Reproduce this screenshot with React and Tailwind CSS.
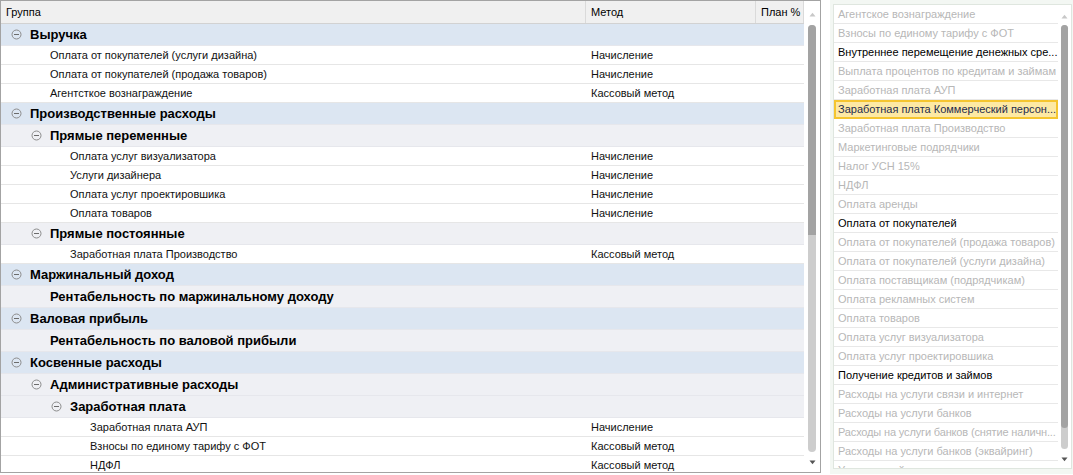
import React from "react";

const rows = [
  { t: "g0", label: "Выручка" },
  { t: "d", lv: 1, label: "Оплата от покупателей (услуги дизайна)", m: "Начисление" },
  { t: "d", lv: 1, label: "Оплата от покупателей (продажа товаров)", m: "Начисление" },
  { t: "d", lv: 1, label: "Агентсткое вознаграждение", m: "Кассовый метод" },
  { t: "g0", label: "Производственные расходы" },
  { t: "g1", label: "Прямые переменные" },
  { t: "d", lv: 2, label: "Оплата услуг визуализатора", m: "Начисление" },
  { t: "d", lv: 2, label: "Услуги дизайнера", m: "Начисление" },
  { t: "d", lv: 2, label: "Оплата услуг проектировшика", m: "Начисление" },
  { t: "d", lv: 2, label: "Оплата товаров", m: "Начисление" },
  { t: "g1", label: "Прямые постоянные" },
  { t: "d", lv: 2, label: "Заработная плата Производство", m: "Кассовый метод" },
  { t: "g0", label: "Маржинальный доход" },
  { t: "r", label: "Рентабельность по маржинальному доходу" },
  { t: "g0", label: "Валовая прибыль" },
  { t: "r", label: "Рентабельность по валовой прибыли" },
  { t: "g0", label: "Косвенные расходы" },
  { t: "g1", label: "Административные расходы" },
  { t: "g2", label: "Заработная плата" },
  { t: "d", lv: 3, label: "Заработная плата АУП", m: "Начисление" },
  { t: "d", lv: 3, label: "Взносы по единому тарифу с ФОТ", m: "Кассовый метод" },
  { t: "d", lv: 3, label: "НДФЛ", m: "Кассовый метод" },
];

const items = [
  ["Агентское вознаграждение", 0],
  ["Взносы по единому тарифу с ФОТ", 0],
  ["Внутреннее перемещение денежных сре...", 1],
  ["Выплата процентов по кредитам и займам", 0],
  ["Заработная плата АУП", 0],
  ["Заработная плата Коммерческий персон...", 2],
  ["Заработная плата Производство", 0],
  ["Маркетинговые подрядчики", 0],
  ["Налог УСН 15%", 0],
  ["НДФЛ", 0],
  ["Оплата аренды", 0],
  ["Оплата от покупателей", 1],
  ["Оплата от покупателей (продажа товаров)", 0],
  ["Оплата от покупателей (услуги дизайна)", 0],
  ["Оплата поставщикам (подрядчикам)", 0],
  ["Оплата рекламных систем", 0],
  ["Оплата товаров", 0],
  ["Оплата услуг визуализатора", 0],
  ["Оплата услуг проектировшика", 0],
  ["Получение кредитов и займов", 1],
  ["Расходы на  услуги связи и интернет", 0],
  ["Расходы на услуги банков", 0],
  ["Расходы на услуги банков (снятие наличн...", 0],
  ["Расходы на услуги банков (эквайринг)", 0],
  ["Услуги дизайнера", 0],
];

function Minus() {
  return (
    <svg width="11" height="11" viewBox="0 0 11 11" className="shrink-0">
      <circle cx="5.5" cy="5.5" r="4.5" fill="none" stroke="#8c8c8c" strokeWidth="1" />
      <line x1="3" y1="5.5" x2="8" y2="5.5" stroke="#6c6c6c" strokeWidth="1" />
    </svg>
  );
}

function Up({ color }) {
  return (
    <svg width="7" height="5" viewBox="0 0 7 5">
      <path d="M0.5 4.5 L3.5 0.8 L6.5 4.5 Z" fill={color} />
    </svg>
  );
}
function Down({ color }) {
  return (
    <svg width="7" height="5" viewBox="0 0 7 5">
      <path d="M0.5 0.5 L3.5 4.2 L6.5 0.5 Z" fill={color} />
    </svg>
  );
}

function Row({ r }) {
  if (r.t === "d") {
    const pl = r.lv === 1 ? "pl-[49px]" : r.lv === 2 ? "pl-[69px]" : "pl-[89px]";
    return (
      <div className="flex h-[19px] items-center border-b border-[#e6e6e6] bg-white text-[11px] text-[#111]">
        <div className={`w-[585px] shrink-0 ${pl} truncate`}>{r.label}</div>
        <div className="w-[170px] shrink-0 pl-[5px]">{r.m}</div>
        <div className="flex-1" />
      </div>
    );
  }
  const bg = r.t === "g0" ? "bg-[#dce6f2]" : "bg-[#eff0f4]";
  const pl =
    r.t === "g0" ? "pl-[10px]" : r.t === "g1" ? "pl-[30px]" : r.t === "g2" ? "pl-[50px]" : "pl-[49px]";
  return (
    <div className={`flex h-[22px] items-center border-b border-[#e6e7ec] ${bg} ${pl}`}>
      {r.t !== "r" && <Minus />}
      <span className={`${r.t !== "r" ? "ml-[8px]" : ""} text-[13px] font-bold text-black whitespace-nowrap`}>
        {r.label}
      </span>
    </div>
  );
}

export default function App() {
  return (
    <div
      className="flex h-[475px] w-[1073px] overflow-hidden bg-white"
      style={{ fontFamily: '"Liberation Sans", Arial, sans-serif' }}
    >
      {/* left table */}
      <div className="flex h-[473px] w-[821px] shrink-0 border border-[#a3a3a3] bg-white">
        <div className="flex w-[803px] shrink-0 flex-col overflow-hidden">
          <div className="flex h-[23px] shrink-0 border-b border-[#d2d2d2] bg-[#f0f0f0] text-[11px] text-black">
            <div className="flex w-[585px] shrink-0 items-center border-r border-[#dadada] pl-[5px]">Группа</div>
            <div className="flex w-[170px] shrink-0 items-center border-r border-[#dadada] pl-[5px]">Метод</div>
            <div className="flex flex-1 items-center border-r border-[#dadada] pl-[5px]">План %</div>
          </div>
          <div className="flex flex-col">
            {rows.map((r, i) => (
              <Row key={i} r={r} />
            ))}
          </div>
        </div>
        <div className="flex w-[16px] shrink-0 flex-col items-center pt-[11px] pb-[7px]">
          <Up color="#c8c8c8" />
          <div className="relative mt-[8px] mb-[8px] w-[8px] flex-1 rounded-full bg-[#cdcdcd]">
            <div className="absolute left-0 top-0 h-[210px] w-[8px] rounded-t-full bg-[#a3a3a3]" />
          </div>
          <Down color="#555" />
        </div>
      </div>

      {/* right list */}
      <div className="ml-[9px] flex h-[474px] flex-1 flex-col bg-[#f3f7f3] pt-[4px] pl-[3px] pr-[1px] pb-[5px]">
        <div className="flex min-h-0 flex-1 border border-[#dfe6df] bg-white">
          <div className="flex w-[224px] shrink-0 flex-col overflow-hidden">
            {items.map(([label, s], i) =>
              s === 2 ? (
                <div
                  key={i}
                  className="flex h-[19px] shrink-0 items-center border-2 border-[#f5c52f] bg-[#fde9a4] pl-[2px] text-[11px] text-[#1d2b4f] whitespace-nowrap overflow-hidden"
                >
                  {label}
                </div>
              ) : (
                <div
                  key={i}
                  className={`flex h-[19px] shrink-0 items-center overflow-hidden border-b border-[#e8e8e8] pl-[4px] text-[11px] whitespace-nowrap ${
                    s === 1 ? "text-black" : "text-[#b7b7b7]"
                  } ${i === 22 ? "tracking-[-0.15px]" : ""}`}
                >
                  {label}
                </div>
              )
            )}
          </div>
          <div className="flex flex-1 flex-col items-center pt-[9px] pb-[6px]">
            <Up color="#c8c8c8" />
            <div className="relative mt-[6px] mb-[8px] w-[7px] flex-1 rounded-full bg-[#cdcdcd]">
              <div className="absolute left-0 top-0 h-[403px] w-[7px] rounded-full bg-[#a3a3a3]" />
            </div>
            <Down color="#555" />
          </div>
        </div>
      </div>
    </div>
  );
}
